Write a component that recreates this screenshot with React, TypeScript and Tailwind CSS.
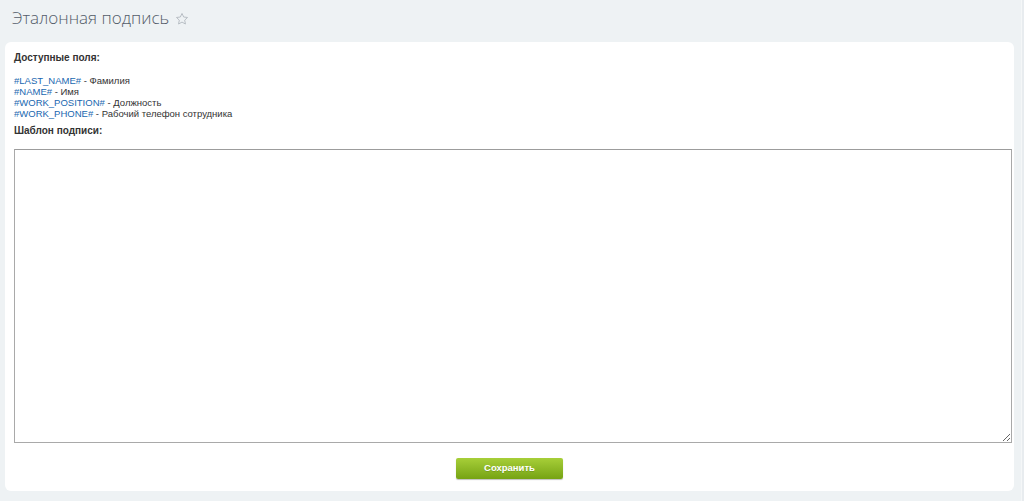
import React from "react";

function Star() {
  return (
    <svg width="14" height="14" viewBox="0 0 24 24" fill="none" stroke="#b4bac1" strokeWidth="1.6" strokeLinejoin="round">
      <path d="M12 2.5l2.9 6.1 6.6.8-4.9 4.6 1.3 6.6L12 17.3l-5.9 3.3 1.3-6.6-4.9-4.6 6.6-.8z" />
    </svg>
  );
}

export default function App() {
  const fields = [
    ["#LAST_NAME#", "Фамилия"],
    ["#NAME#", "Имя"],
    ["#WORK_POSITION#", "Должность"],
    ["#WORK_PHONE#", "Рабочий телефон сотрудника"],
  ];
  return (
    <div className="flex w-[1024px] h-[501px] bg-[#eef2f4] overflow-hidden" style={{ fontFamily: '"Liberation Sans", Arial, sans-serif' }}>
      <div className="flex flex-col flex-1 min-w-0">
        <div className="h-[42px] flex items-start pl-[12px] pt-[5px]">
          <span className="text-[17px] leading-[26px] font-light text-[#535c69]" style={{ fontFamily: '"Open Sans", sans-serif' }}>
            Эталонная подпись
          </span>
          <span className="ml-[6px] mt-[7px]">
            <Star />
          </span>
        </div>
        <div className="ml-[5px] w-[1009px] h-[449px] bg-white rounded-[6px] pl-[9px] pt-[10px] flex flex-col">
          <div className="text-[10px] leading-[11px] font-bold text-[#333]">Доступные поля:</div>
          <div className="mt-[12px] text-[9.5px] leading-[11px] text-[#333]">
            {fields.map(([k, v]) => (
              <div key={k}>
                <span className="text-[#2067b0]">{k}</span> - {v}
              </div>
            ))}
          </div>
          <div className="mt-[6px] text-[10px] leading-[11px] font-bold text-[#333]">Шаблон подписи:</div>
          <textarea className="mt-[13px] w-[998px] h-[294px] border border-[#a9a9a9] border-t-[#9c9c9c] outline-none bg-white" />
          <div className="flex justify-center mt-[15px] pr-[9px]">
            <button className="w-[107px] h-[21px] rounded-[2px] bg-gradient-to-b from-[#a7cf38] to-[#76a312] text-white text-[9.5px] font-bold shadow-[0_1px_1px_rgba(0,0,0,0.25)]" style={{ textShadow: "0 1px 0 rgba(0,0,0,0.15)" }}>
              Сохранить
            </button>
          </div>
        </div>
      </div>
      <div className="w-[3px] h-full bg-[#e8ecef] border-l border-[#f5f7f8]" />
    </div>
  );
}
